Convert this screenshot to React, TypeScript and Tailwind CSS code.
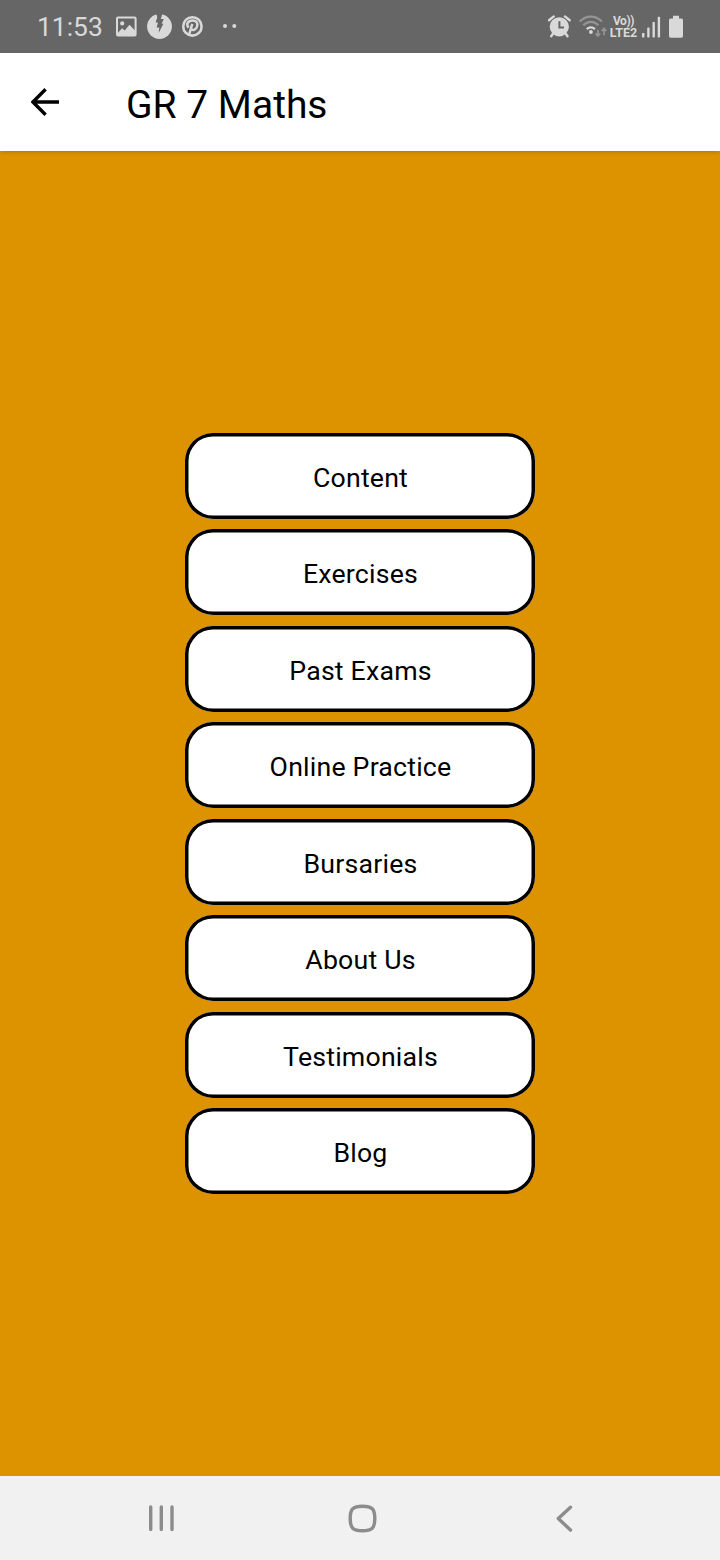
import React from 'react';

const menuItems = [
  'Content',
  'Exercises',
  'Past Exams',
  'Online Practice',
  'Bursaries',
  'About Us',
  'Testimonials',
  'Blog',
];

const StatusBar: React.FC = () => (
  <div className="flex h-[53px] shrink-0 items-center bg-[#666666] text-[#d9d9d9]">
    <div className="ml-[37px] w-[79px] text-[26.4px] leading-[30px]">11:53</div>

    {/* Notifications */}
    <svg className="h-[53px] w-[130px]" viewBox="116 0 130 53" fill="none">
      <rect x="117" y="17.6" width="18.6" height="18" rx="1" stroke="currentColor" strokeWidth="2" />
      <circle cx="122.2" cy="23.4" r="2.1" fill="currentColor" />
      <path d="M118 32.8l4-4.6 2.7 2.4 4.8-5.8 5.5 5.7V35h-17z" fill="currentColor" />
      <circle cx="159.5" cy="26.5" r="12.4" fill="currentColor" />
      <path d="M156 13h6.6l-1.8 6h3l-2.2 4.8h1.8l-4.8 9.2.7-5.6h-2.7l1.4-5h-2.4l1.7-5z" fill="#666666" />
      <circle cx="192.4" cy="26.4" r="9.2" stroke="currentColor" strokeWidth="2.6" />
      <path
        d="M192.3 23.8l-3.5 11.8M188.7 27.6c-3.2-3.3-.8-7.2 3.9-7.2 3.5 0 5.3 2.4 4.6 5.6-.7 3.4-4.4 5.3-6.3 2.8"
        stroke="currentColor"
        strokeWidth="2.5"
      />
      <circle cx="225" cy="26" r="2" fill="currentColor" />
      <circle cx="234.3" cy="26" r="2" fill="currentColor" />
    </svg>

    {/* Alarm and wifi */}
    <svg className="ml-auto h-[53px] w-[62px]" viewBox="546 0 62 53" fill="none">
      <circle cx="559.3" cy="26.8" r="9.6" fill="currentColor" />
      <path d="M549 20.3l4.8-3.9M569.7 20.3l-4.8-3.9" stroke="currentColor" strokeWidth="2.4" strokeLinecap="round" />
      <path d="M553.5 33l-2.3 3.2M565.2 33l2.3 3.2" stroke="currentColor" strokeWidth="2.4" strokeLinecap="round" />
      <path d="M559.4 21.3v6.2h4.6" stroke="#666666" strokeWidth="2" />
      <path d="M579.8 21.4c6.4-6.5 15.7-6.5 22.1 0M583.3 25.3c4.4-4.6 10.7-4.6 15.1 0" stroke="#959595" strokeWidth="2.2" />
      <path d="M586.8 29.1c2.4-2.4 5.7-2.4 8.1 0" stroke="currentColor" strokeWidth="2.2" />
      <circle cx="590.9" cy="32" r="1.9" fill="currentColor" />
      <path d="M597.9 30v6M595.6 33.4l2.3 2.6 2.3-2.6M604 35.3v-6.5M601.7 31l2.3-2.6 2.3 2.6" stroke="#959595" strokeWidth="1.7" />
    </svg>

    <div className="flex w-[32px] flex-col items-center pr-px font-bold leading-[12px]">
      <span className="text-[12px] tracking-[-0.4px]">Vo))</span>
      <span className="whitespace-nowrap text-[12.5px]">LTE2</span>
    </div>

    {/* Signal and battery */}
    <svg className="mr-[34px] h-[53px] w-[46px]" viewBox="640 0 46 53" fill="currentColor">
      <rect x="642" y="33" width="2.4" height="4.4" rx=".6" />
      <rect x="647.2" y="27.5" width="2.4" height="9.9" rx=".6" />
      <rect x="652.5" y="22" width="2.4" height="15.4" rx=".6" />
      <rect x="657.7" y="16.8" width="2.4" height="20.6" rx=".6" />
      <path d="M673 15.8h6v2.8h2.3q1.7 0 1.7 1.7v15.8q0 1.6-1.7 1.6h-10.6q-1.7 0-1.7-1.6V20.3q0-1.7 1.7-1.7h2.3z" />
    </svg>
  </div>
);

const Header: React.FC = () => (
  <header className="relative flex h-[98px] shrink-0 items-center bg-white shadow-[0_2px_4px_-1px_rgba(0,0,0,0.2)]">
    <button className="ml-[31px]" aria-label="Back">
      <svg className="h-[98px] w-[30px]" viewBox="0 0 30 98" fill="none" stroke="#000" strokeWidth="3.4">
        <path d="M28 49H2M14.6 36.3L1.9 49l12.7 12.7" />
      </svg>
    </button>
    <h1 className="ml-[65px] pt-[5px] text-[39px] leading-[46px]">GR 7 Maths</h1>
  </header>
);

const NavigationBar: React.FC = () => (
  <nav className="flex h-[84px] shrink-0 items-center bg-[#f1f1f1]">
    <svg className="h-[84px] w-full" viewBox="0 0 720 84" fill="none" stroke="#8c8c8c" strokeWidth="3.4" strokeLinecap="round">
      <path d="M150.7 31v22.5M161.3 31v22.5M172 31v22.5" />
      <path d="M362.5 30.2c9.6 0 12.3 2.7 12.3 12.3s-2.7 12.3-12.3 12.3-12.3-2.7-12.3-12.3 2.7-12.3 12.3-12.3z" />
      <path d="M570.5 31.2L558.3 42.5l12.2 11.6" strokeLinejoin="round" />
    </svg>
  </nav>
);

const App: React.FC = () => {
  return (
    <div className="flex h-[1560px] w-[720px] flex-col font-['Roboto',sans-serif] text-black">
      <StatusBar />
      <Header />

      {/* Menu */}
      <main className="flex flex-1 flex-col items-center justify-center gap-[10.5px] bg-[#dd9200]">
        {menuItems.map((item) => (
          <button
            key={item}
            className="h-[86px] w-[350px] rounded-[28px] bg-white pt-1 pl-px text-[26.7px] leading-[32px] tracking-[0.2px] shadow-[inset_0_0_0_3.5px_#000]"
          >
            {item}
          </button>
        ))}
      </main>

      <NavigationBar />
    </div>
  );
};

export default App;
